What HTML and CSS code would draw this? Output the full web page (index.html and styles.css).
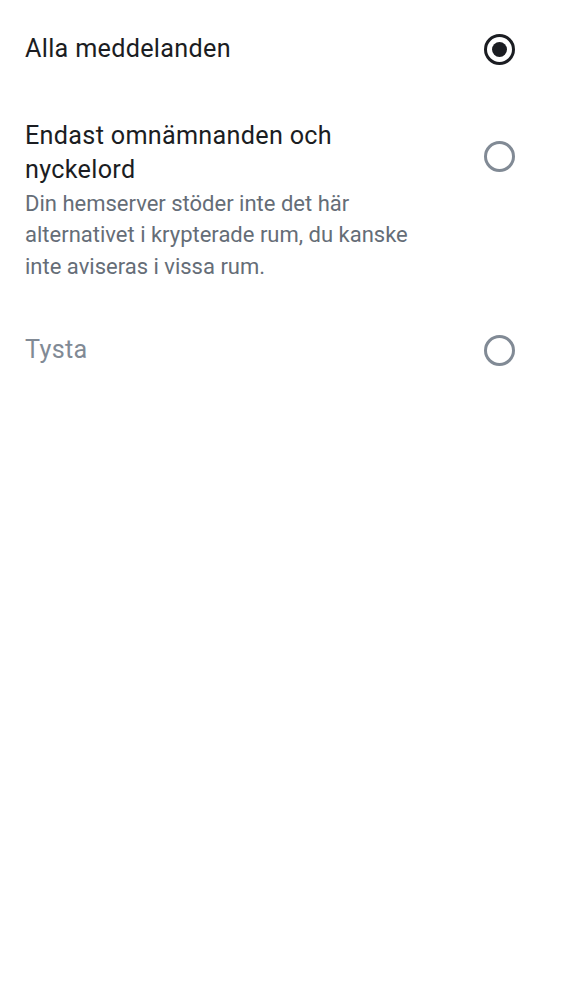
FILE: index.html
```html
<!DOCTYPE html>
<html lang="sv">
<head>
<meta charset="utf-8">
<link rel="stylesheet" href="styles.css">
</head>
<body>
<div class="list">
  <div class="row row-single">
    <div class="text">
      <div class="title">Alla meddelanden</div>
    </div>
    <div class="radio checked"><span class="dot"></span></div>
  </div>
  <div class="row row-multi">
    <div class="text">
      <div class="title">Endast omnämnanden och nyckelord</div>
      <div class="desc">Din hemserver stöder inte det här alternativet i krypterade rum, du kanske inte aviseras i vissa rum.</div>
    </div>
    <div class="radio radio-top"></div>
  </div>
  <div class="row row-single">
    <div class="text">
      <div class="title disabled">Tysta</div>
    </div>
    <div class="radio"></div>
  </div>
</div>
</body>
</html>
```
FILE: styles.css
```css
html, body {
  margin: 0;
  padding: 0;
  background: #ffffff;
}
body {
  font-family: Roboto, "Noto Sans", sans-serif;
  width: 562px;
  height: 1000px;
}
.list {
  display: flex;
  flex-direction: column;
}
.row {
  display: flex;
  align-items: center;
  justify-content: space-between;
  padding-left: 25px;
  padding-right: 47px;
}
.text {
  width: 400px;
  flex: none;
}
.title {
  font-size: 25.2px;
  line-height: 34.6px;
  letter-spacing: 0.3px;
  color: #1b1d22;
}
.title.disabled {
  color: #818a95;
}
.desc {
  font-size: 22px;
  line-height: 31.5px;
  color: #656d77;
}
.row-single {
  padding-top: 32px;
  padding-bottom: 32px;
}
.row-multi {
  align-items: flex-start;
  padding-top: 20px;
  padding-bottom: 19px;
}
.radio {
  width: 31px;
  height: 31px;
  box-sizing: border-box;
  border: 3px solid #818a95;
  border-radius: 50%;
  flex: none;
  display: flex;
  align-items: center;
  justify-content: center;
}
.radio.checked {
  border-color: #1b1d22;
}
.radio .dot {
  width: 15px;
  height: 15px;
  border-radius: 50%;
  background: #1b1d22;
}
.radio-top {
  margin-top: 22px;
}
```
